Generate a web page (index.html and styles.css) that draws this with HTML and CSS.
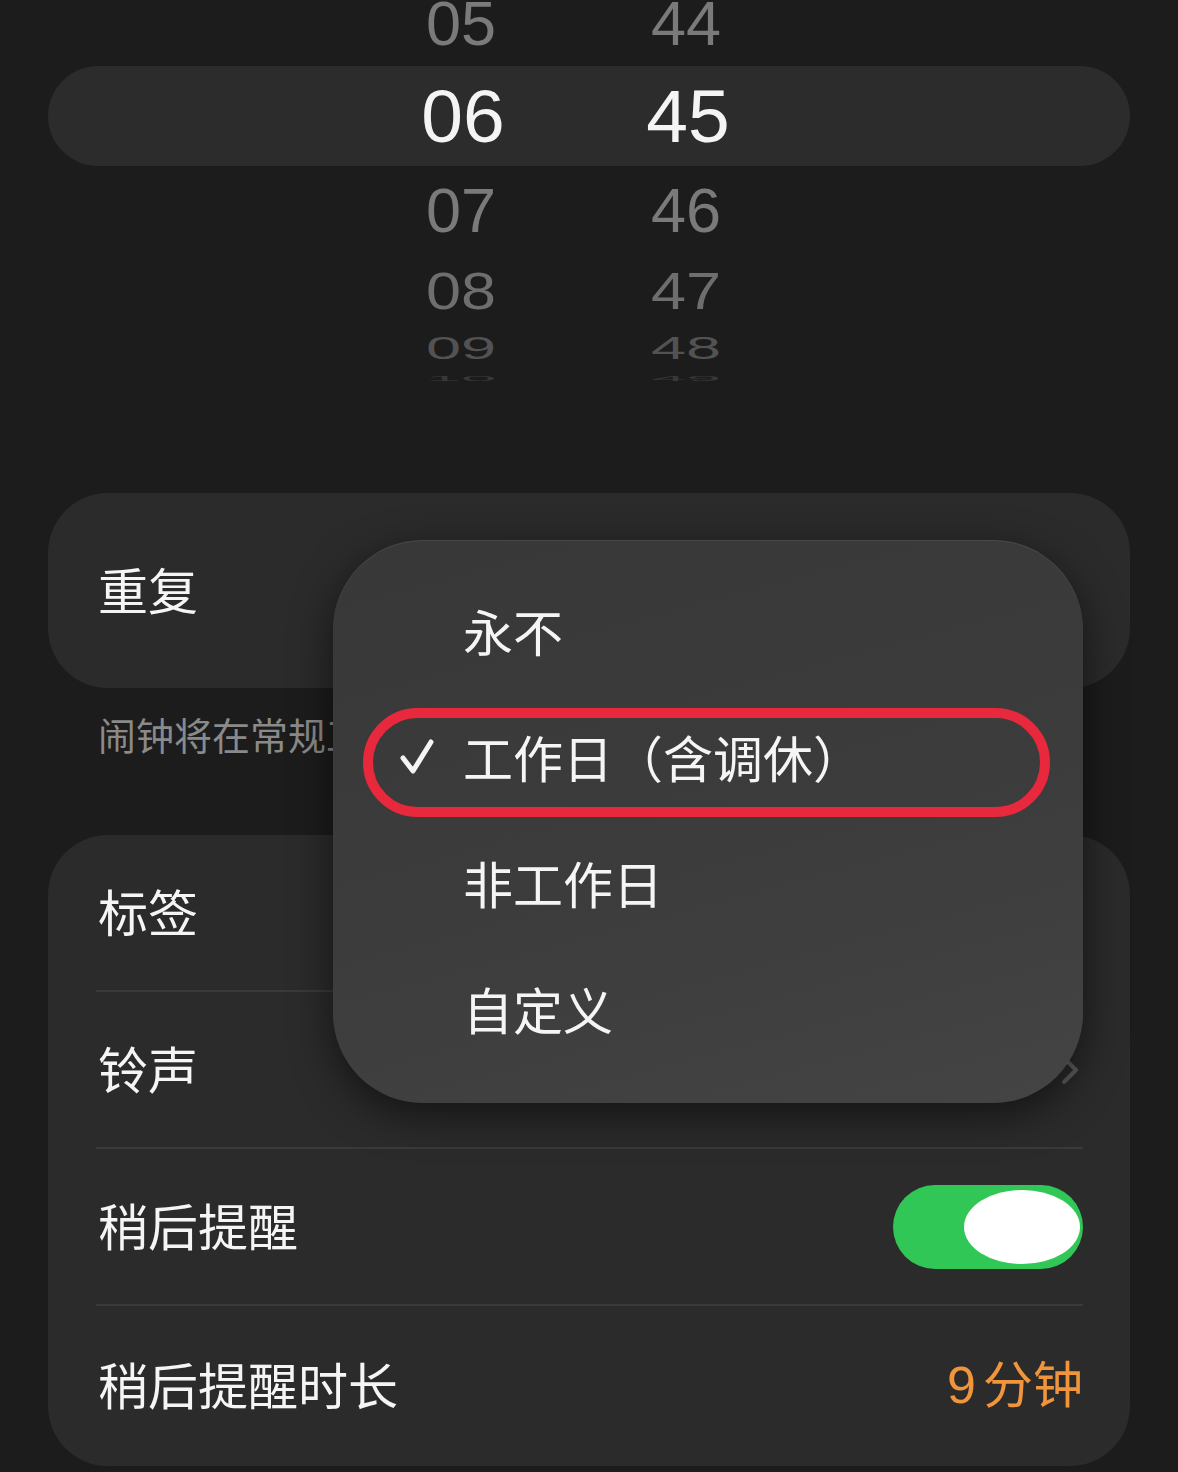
FILE: index.html
```html
<!DOCTYPE html>
<html lang="zh-CN">
<head>
<meta charset="utf-8">
<title>闹钟</title>
<link rel="stylesheet" href="styles.css">
</head>
<body>
<div class="page">
  <div class="picker">
    <div class="band"></div>
    <div class="cols">
      <div class="col">
        <div class="n r1">05</div>
        <div class="n r2">06</div>
        <div class="n r3">07</div>
        <div class="n r4">08</div>
        <div class="n r5">09</div>
        <div class="n r6">10</div>
      </div>
      <div class="col">
        <div class="n r1">44</div>
        <div class="n r2">45</div>
        <div class="n r3">46</div>
        <div class="n r4">47</div>
        <div class="n r5">48</div>
        <div class="n r6">49</div>
      </div>
    </div>
  </div>

  <div class="card single">
    <span class="label">重复</span>
  </div>
  <div class="note">闹钟将在常规工作日响铃。</div>

  <div class="card list">
    <div class="row"><span class="label">标签</span></div>
    <div class="row"><span class="label">铃声</span>
      <svg class="chev" width="20" height="30" viewBox="0 0 20 30"><path d="M4 3 L16 15 L4 27" fill="none" stroke="#5e5e5e" stroke-width="4" stroke-linecap="round" stroke-linejoin="round"/></svg>
    </div>
    <div class="row"><span class="label">稍后提醒</span>
      <div class="toggle"><div class="knob"></div></div>
    </div>
    <div class="row last"><span class="label">稍后提醒时长</span><span class="value"><span class="digit">9</span>分钟</span></div>
  </div>

  <div class="menu">
    <div class="item"><span class="check"></span><span>永不</span></div>
    <div class="item"><span class="check"><svg width="34" height="36" viewBox="0 0 34 36"><path d="M3 20 L13 33 L31 4" fill="none" stroke="#f5f5f5" stroke-width="5" stroke-linecap="round" stroke-linejoin="round"/></svg></span><span>工作日（含调休）</span></div>
    <div class="item"><span class="check"></span><span>非工作日</span></div>
    <div class="item"><span class="check"></span><span>自定义</span></div>
    <div class="ring"></div>
  </div>
</div>
</body>
</html>
```

FILE: styles.css
```css
html, body {
  margin: 0;
  padding: 0;
  background: #1c1c1c;
}
body {
  width: 1178px;
  height: 1472px;
  overflow: hidden;
  font-family: "Noto Sans CJK SC", "Noto Sans", sans-serif;
  color: #f5f5f5;
}
.page {
  position: relative;
  padding: 0 48px;
}
.picker {
  display: grid;
  height: 400px;
}
.band, .cols {
  grid-area: 1 / 1;
  align-self: start;
}
.band {
  margin-top: 66px;
  height: 100px;
  border-radius: 50px;
  background: #2c2c2c;
}
.cols {
  display: flex;
  padding-left: 368px;
  gap: 135px;
}
.col {
  width: 90px;
  display: flex;
  flex-direction: column;
  align-items: center;
}
.n {
  font-family: "Liberation Sans", Arial, sans-serif;
  font-size: 63px;
  text-align: center;
  white-space: nowrap;
  color: #7a7a7a;
}
.r1 { height: 46px; line-height: 46px; margin-top: 0; }
.r2 { height: 56px; line-height: 56px; margin-top: 42px; font-size: 75px; color: #f4f4f4; position: relative; left: 2px; }
.r3 { height: 46px; line-height: 46px; margin-top: 43px; }
.r4 { height: 38px; line-height: 38px; margin-top: 39px; transform: scaleY(0.82); color: #6e6e6e; }
.r5 { height: 24px; line-height: 24px; margin-top: 26px; transform: scaleY(0.5); color: #525252; }
.r6 { height: 6px; line-height: 6px; margin-top: 15px; transform: scaleY(0.12); color: #383838; }

.card {
  background: #2b2b2b;
  border-radius: 60px;
}
.single {
  margin-top: 93px;
  height: 195px;
  display: flex;
  align-items: center;
  padding-left: 50px;
}
.label {
  font-size: 50px;
  line-height: 60px;
  color: #f5f5f5;
  position: relative;
  top: -3px;
}
.note {
  margin-top: 21px;
  padding-left: 50px;
  font-size: 38px;
  line-height: 50px;
  color: #8a8a8a;
  white-space: nowrap;
}
.list {
  margin-top: 76px;
  padding: 0 47px 0 48px;
}
.row {
  height: 155px;
  display: flex;
  align-items: center;
  justify-content: space-between;
  padding-left: 2px;
  border-bottom: 2px solid #3a3a3a;
}
.row.last {
  height: 160px;
  border-bottom: none;
}
.chev {
  margin-right: 3px;
}
.toggle {
  width: 190px;
  height: 84px;
  border-radius: 42px;
  background: #31c757;
  display: flex;
  align-items: center;
  justify-content: flex-end;
  padding-right: 3px;
  box-sizing: border-box;
}
.knob {
  width: 116px;
  height: 74px;
  border-radius: 50%;
  background: #ffffff;
}
.value {
  font-size: 50px;
  line-height: 60px;
  color: #f0953c;
  position: relative;
  top: -3px;
}
.digit {
  font-family: "Liberation Sans", Arial, sans-serif;
  font-size: 52px;
  margin-right: 7px;
}

.menu {
  position: absolute;
  left: 333px;
  top: 540px;
  width: 750px;
  height: 563px;
  box-sizing: border-box;
  padding: 27px 0 0;
  border-radius: 90px;
  background: linear-gradient(165deg, #383838 0%, #3c3c3c 55%, #444444 100%);
  box-shadow: 0 12px 40px rgba(0, 0, 0, 0.55), inset 0 1px 0 rgba(255, 255, 255, 0.08);
  z-index: 2;
}
.item {
  height: 126px;
  display: flex;
  align-items: center;
  padding-left: 67px;
  font-size: 50px;
  color: #f5f5f5;
}
.check {
  width: 34px;
  height: 36px;
  margin-right: 29px;
  display: flex;
}
.ring {
  position: absolute;
  left: 30px;
  top: 168px;
  width: 687px;
  height: 109px;
  box-sizing: border-box;
  border: 10px solid #e8283c;
  border-radius: 56px;
}
```
